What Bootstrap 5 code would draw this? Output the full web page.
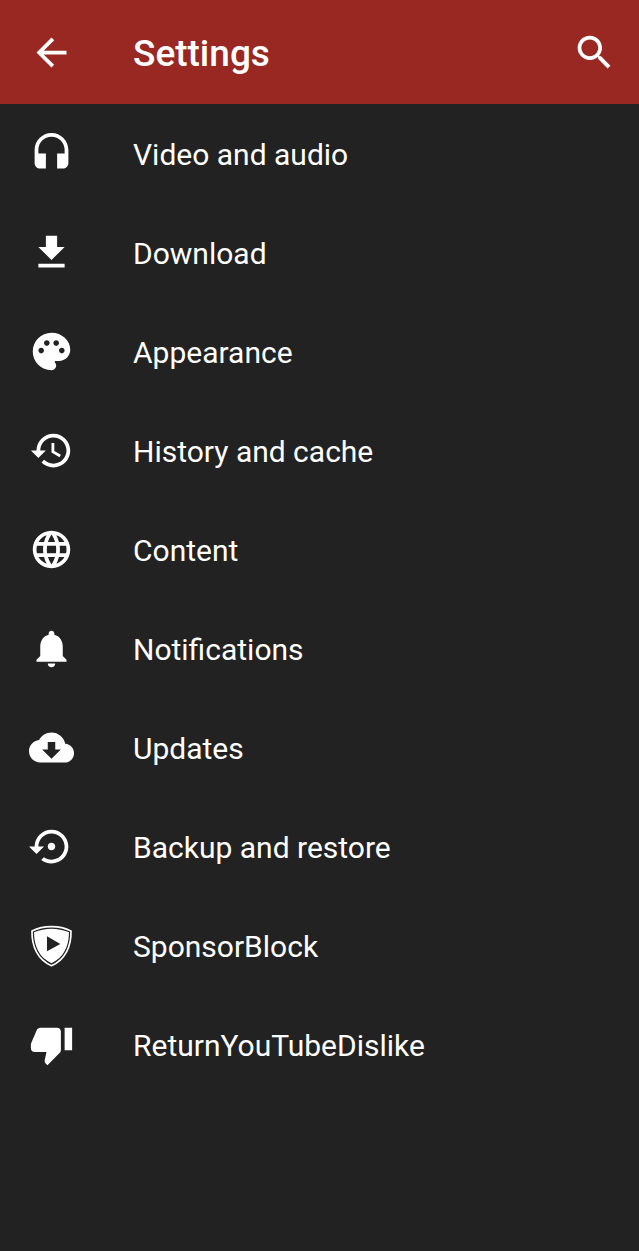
<!DOCTYPE html>
<html lang="en">
<head>
<meta charset="utf-8">
<meta name="viewport" content="width=device-width, initial-scale=1">
<title>Settings</title>
<link href="https://cdn.jsdelivr.net/npm/bootstrap@5.3.0/dist/css/bootstrap.min.css" rel="stylesheet">
<style>
  body { background: #222; color: #fff; font-family: Roboto, sans-serif; }
  .app-bar { background: #992822; min-height: 104px; padding: 0 22px 0 29px; }
  .app-bar, .setting-row { gap: 59px; }
  .app-title { font-size: 37px; font-weight: 500; line-height: 44px; padding-top: 4px; }
  .setting-row { min-height: 99px; padding: 0 29px; font-size: 30px; line-height: 36px; }
  .setting-row span { padding-top: 2px; }
  .setting-row:hover, .setting-row:focus { background: #2c2c2c; }
  .glyph { width: 45px; height: 45px; fill: #fff; flex: none; display: block; }
</style>
</head>
<body class="min-vh-100">
<header class="app-bar d-flex align-items-center">
  <button type="button" class="btn p-0 border-0" aria-label="Back">
    <svg class="glyph" viewBox="0 0 24 24"><path d="M20 11H7.83l5.59-5.59L12 4l-8 8 8 8 1.41-1.41L7.83 13H20v-2z"/></svg>
  </button>
  <h1 class="app-title mb-0 flex-grow-1">Settings</h1>
  <button type="button" class="btn p-0 border-0" aria-label="Search">
    <svg class="glyph" viewBox="0 0 24 24"><path d="M15.5 14h-.79l-.28-.27C15.41 12.59 16 11.11 16 9.5 16 5.91 13.09 3 9.5 3S3 5.91 3 9.5 5.91 16 9.5 16c1.61 0 3.09-.59 4.23-1.57l.27.28v.79l5 4.99L20.49 19l-4.99-5zm-6 0C7.01 14 5 11.99 5 9.5S7.01 5 9.5 5 14 7.01 14 9.5 11.99 14 9.5 14z"/></svg>
  </button>
</header>
<main>
  <nav class="d-flex flex-column" aria-label="Settings">
    <a href="#video" class="setting-row d-flex align-items-center text-white text-decoration-none">
      <svg class="glyph" viewBox="0 0 24 24" aria-hidden="true"><path d="M12 1c-4.97 0-9 4.03-9 9v7c0 1.66 1.34 3 3 3h3v-8H5v-2c0-3.87 3.13-7 7-7s7 3.13 7 7v2h-4v8h3c1.66 0 3-1.34 3-3v-7c0-4.97-4.03-9-9-9z"/></svg>
      <span>Video and audio</span>
    </a>
    <a href="#download" class="setting-row d-flex align-items-center text-white text-decoration-none">
      <svg class="glyph" viewBox="0 0 24 24" aria-hidden="true"><path d="M19 9h-4V3H9v6H5l7 7 7-7zM5 18v2h14v-2H5z"/></svg>
      <span>Download</span>
    </a>
    <a href="#appearance" class="setting-row d-flex align-items-center text-white text-decoration-none">
      <svg class="glyph" viewBox="0 0 24 24" aria-hidden="true"><path d="M12 2C6.49 2 2 6.49 2 12s4.49 10 10 10c1.38 0 2.5-1.12 2.5-2.5 0-.61-.23-1.2-.64-1.67-.08-.1-.13-.21-.13-.33 0-.28.22-.5.5-.5H16c3.31 0 6-2.69 6-6 0-4.96-4.49-9-10-9zm5.5 11c-.83 0-1.5-.67-1.5-1.5s.67-1.5 1.5-1.5 1.5.67 1.5 1.5-.67 1.5-1.5 1.5zm-3-4c-.83 0-1.5-.67-1.5-1.5S13.67 6 14.5 6s1.5.67 1.5 1.5S15.33 9 14.5 9zM5 11.5c0-.83.67-1.5 1.5-1.5s1.5.67 1.5 1.5S7.33 13 6.5 13 5 12.33 5 11.5zm6-4c0 .83-.67 1.5-1.5 1.5S8 8.33 8 7.5 8.67 6 9.5 6s1.5.67 1.5 1.5z"/></svg>
      <span>Appearance</span>
    </a>
    <a href="#history" class="setting-row d-flex align-items-center text-white text-decoration-none">
      <svg class="glyph" viewBox="0 0 24 24" aria-hidden="true"><path d="M13 3c-4.97 0-9 4.03-9 9H1l3.89 3.89.07.14L9 12H6c0-3.87 3.13-7 7-7s7 3.13 7 7-3.13 7-7 7c-1.93 0-3.68-.79-4.94-2.06l-1.42 1.42C8.27 19.99 10.51 21 13 21c4.97 0 9-4.03 9-9s-4.03-9-9-9zm-1 5v5l4.28 2.54.72-1.21-3.5-2.08V8H12z"/></svg>
      <span>History and cache</span>
    </a>
    <a href="#content" class="setting-row d-flex align-items-center text-white text-decoration-none">
      <svg class="glyph" viewBox="0 0 24 24" aria-hidden="true"><path d="M11.99 2C6.47 2 2 6.48 2 12s4.47 10 9.99 10C17.52 22 22 17.52 22 12S17.52 2 11.99 2zm6.93 6h-2.95c-.32-1.25-.78-2.45-1.38-3.56 1.84.63 3.37 1.91 4.33 3.56zM12 4.04c.83 1.2 1.48 2.53 1.91 3.96h-3.82c.43-1.43 1.08-2.76 1.91-3.96zM4.26 14C4.1 13.36 4 12.69 4 12s.1-1.36.26-2h3.38c-.08.66-.14 1.32-.14 2s.06 1.34.14 2H4.26zm.82 2h2.95c.32 1.25.78 2.45 1.38 3.56-1.84-.63-3.37-1.9-4.33-3.56zm2.95-8H5.08c.96-1.66 2.49-2.93 4.33-3.56C8.81 5.55 8.35 6.75 8.03 8zM12 19.96c-.83-1.2-1.48-2.53-1.91-3.96h3.82c-.43 1.43-1.08 2.76-1.91 3.96zM14.34 14H9.66c-.09-.66-.16-1.32-.16-2s.07-1.35.16-2h4.68c.09.65.16 1.32.16 2s-.07 1.34-.16 2zm.25 5.56c.6-1.11 1.06-2.31 1.38-3.56h2.95c-.96 1.65-2.49 2.93-4.33 3.56zM16.36 14c.08-.66.14-1.32.14-2s-.06-1.34-.14-2h3.38c.16.64.26 1.31.26 2s-.1 1.36-.26 2h-3.38z"/></svg>
      <span>Content</span>
    </a>
    <a href="#notifications" class="setting-row d-flex align-items-center text-white text-decoration-none">
      <svg class="glyph" viewBox="0 0 24 24" aria-hidden="true"><path d="M12 22c1.1 0 2-.9 2-2h-4c0 1.1.89 2 2 2zm6-6v-5c0-3.07-1.64-5.64-4.5-6.32V4c0-.83-.67-1.5-1.5-1.5s-1.5.67-1.5 1.5v.68C7.63 5.36 6 7.92 6 11v5l-2 2v1h16v-1l-2-2z"/></svg>
      <span>Notifications</span>
    </a>
    <a href="#updates" class="setting-row d-flex align-items-center text-white text-decoration-none">
      <svg class="glyph" viewBox="0 0 24 24" aria-hidden="true"><path d="M19.35 10.04C18.67 6.59 15.64 4 12 4 9.11 4 6.6 5.64 5.35 8.04 2.34 8.36 0 10.91 0 14c0 3.31 2.69 6 6 6h13c2.76 0 5-2.24 5-5 0-2.64-2.05-4.78-4.65-4.96zM17 13l-5 5-5-5h3V9h4v4h3z"/></svg>
      <span>Updates</span>
    </a>
    <a href="#backup" class="setting-row d-flex align-items-center text-white text-decoration-none">
      <svg class="glyph" viewBox="0 0 24 24" aria-hidden="true"><path d="M14 12c0-1.1-.9-2-2-2s-2 .9-2 2 .9 2 2 2 2-.9 2-2zm-2-9c-4.97 0-9 4.03-9 9H0l4 4 4-4H5c0-3.87 3.13-7 7-7s7 3.13 7 7-3.13 7-7 7c-1.51 0-2.91-.49-4.06-1.3l-1.42 1.44C8.04 20.3 9.94 21 12 21c4.97 0 9-4.03 9-9s-4.03-9-9-9z"/></svg>
      <span>Backup and restore</span>
    </a>
    <a href="#sponsorblock" class="setting-row d-flex align-items-center text-white text-decoration-none">
      <svg class="glyph" viewBox="28 28 135 135" aria-hidden="true"><path d="M95.5 39C76 39 55 43 37 52C36 98 54 138 95.5 156C137 138 155 98 154 52C136 43 115 39 95.5 39Z" fill="none" stroke="#fff" stroke-width="5" stroke-linejoin="round"/><path fill-rule="evenodd" d="M95.5 45C78 45 60 49 43 56C43 98 59 132 95.5 149C132 132 148 98 148 56C131 49 113 45 95.5 45ZM82 68L122 91L82 113Z"/></svg>
      <span>SponsorBlock</span>
    </a>
    <a href="#dislike" class="setting-row d-flex align-items-center text-white text-decoration-none">
      <svg class="glyph" viewBox="0 0 24 24" aria-hidden="true"><path d="M15 3H6c-.83 0-1.54.5-1.84 1.22l-3.02 7.05c-.09.23-.14.47-.14.73v2c0 1.1.9 2 2 2h6.31l-.95 4.57-.03.32c0 .41.17.79.44 1.06L9.83 23l6.59-6.59c.36-.36.58-.86.58-1.41V5c0-1.1-.9-2-2-2zm4 0v12h4V3h-4z"/></svg>
      <span>ReturnYouTubeDislike</span>
    </a>
  </nav>
</main>
<script src="https://cdn.jsdelivr.net/npm/bootstrap@5.3.0/dist/js/bootstrap.bundle.min.js"></script>
</body>
</html>
